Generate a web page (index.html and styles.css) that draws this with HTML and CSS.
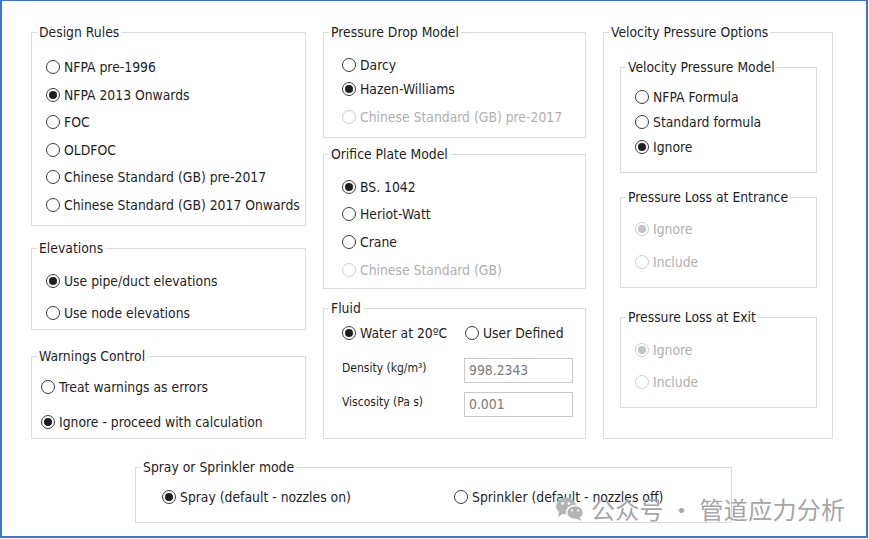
FILE: index.html
```html
<!DOCTYPE html>
<html lang="en">
<head>
    <meta charset="UTF-8">
    <title>Calculation Options</title>
    <link rel="stylesheet" href="styles.css">
</head>
<body>
    <div class="frame">
        <div class="columns">
            <div class="col col-1">
                <div class="group g-rules">
                    <div class="legend">Design Rules</div>
                    <div class="opts">
                        <label class="opt"><span class="radio"></span>NFPA pre-1996</label>
                        <label class="opt"><span class="radio on"></span>NFPA 2013 Onwards</label>
                        <label class="opt"><span class="radio"></span>FOC</label>
                        <label class="opt"><span class="radio"></span>OLDFOC</label>
                        <label class="opt"><span class="radio"></span>Chinese Standard (GB) pre-2017</label>
                        <label class="opt"><span class="radio"></span>Chinese Standard (GB) 2017 Onwards</label>
                    </div>
                </div>
                <div class="group g-elev">
                    <div class="legend">Elevations</div>
                    <div class="opts">
                        <label class="opt"><span class="radio on"></span>Use pipe/duct elevations</label>
                        <label class="opt"><span class="radio"></span>Use node elevations</label>
                    </div>
                </div>
                <div class="group g-warn">
                    <div class="legend">Warnings Control</div>
                    <div class="opts">
                        <label class="opt"><span class="radio"></span>Treat warnings as errors</label>
                        <label class="opt"><span class="radio on"></span>Ignore - proceed with calculation</label>
                    </div>
                </div>
            </div>

            <div class="col col-2">
                <div class="group g-pdm">
                    <div class="legend">Pressure Drop Model</div>
                    <div class="opts">
                        <label class="opt"><span class="radio"></span>Darcy</label>
                        <label class="opt"><span class="radio on"></span>Hazen-Williams</label>
                        <label class="opt off spaced"><span class="radio"></span>Chinese Standard (GB) pre-2017</label>
                    </div>
                </div>
                <div class="group g-opm">
                    <div class="legend">Orifice Plate Model</div>
                    <div class="opts">
                        <label class="opt"><span class="radio on"></span>BS. 1042</label>
                        <label class="opt"><span class="radio"></span>Heriot-Watt</label>
                        <label class="opt"><span class="radio"></span>Crane</label>
                        <label class="opt off"><span class="radio"></span>Chinese Standard (GB)</label>
                    </div>
                </div>
                <div class="group g-fluid">
                    <div class="legend">Fluid</div>
                    <div class="fluid-radios">
                        <label class="opt water"><span class="radio on"></span>Water at 20ºC</label>
                        <label class="opt"><span class="radio"></span>User Defined</label>
                    </div>
                    <div class="field first">
                        <span class="field-label">Density (kg/m³)</span>
                        <input class="field-input" type="text" value="998.2343" disabled>
                    </div>
                    <div class="field">
                        <span class="field-label">Viscosity (Pa s)</span>
                        <input class="field-input" type="text" value="0.001" disabled>
                    </div>
                </div>
            </div>

            <div class="col col-3">
                <div class="group g-vpo">
                    <div class="legend">Velocity Pressure Options</div>
                    <div class="group g-vpm">
                        <div class="legend">Velocity Pressure Model</div>
                        <div class="opts">
                            <label class="opt"><span class="radio"></span>NFPA Formula</label>
                            <label class="opt"><span class="radio"></span>Standard formula</label>
                            <label class="opt"><span class="radio on"></span>Ignore</label>
                        </div>
                    </div>
                    <div class="group g-ple">
                        <div class="legend">Pressure Loss at Entrance</div>
                        <div class="opts">
                            <label class="opt off"><span class="radio on"></span>Ignore</label>
                            <label class="opt off"><span class="radio"></span>Include</label>
                        </div>
                    </div>
                    <div class="group g-plx">
                        <div class="legend">Pressure Loss at Exit</div>
                        <div class="opts">
                            <label class="opt off"><span class="radio on"></span>Ignore</label>
                            <label class="opt off"><span class="radio"></span>Include</label>
                        </div>
                    </div>
                </div>
            </div>
        </div>

        <div class="group g-spray">
            <div class="legend">Spray or Sprinkler mode</div>
            <div class="opts row">
                <label class="opt spray"><span class="radio on"></span>Spray (default - nozzles on)</label>
                <label class="opt"><span class="radio"></span>Sprinkler (default - nozzles off)</label>
            </div>
        </div>

        <!-- filigrane -->
        <div class="watermark">
            <svg class="wm-icon" width="30" height="26" viewBox="0 0 30 26">
                <ellipse cx="11" cy="10" rx="10" ry="8.5" fill="#b4b4b4"/>
                <polygon points="4,15 3,21 9,17" fill="#b4b4b4"/>
                <circle cx="7.5" cy="7.5" r="1.3" fill="#fff"/>
                <circle cx="14" cy="7.5" r="1.3" fill="#fff"/>
                <ellipse cx="20" cy="16.5" rx="8.5" ry="7" fill="#b4b4b4" stroke="#fff" stroke-width="1.5"/>
                <polygon points="24,21 27,25 21,22.5" fill="#b4b4b4"/>
                <circle cx="17" cy="14.5" r="1.1" fill="#fff"/>
                <circle cx="23" cy="14.5" r="1.1" fill="#fff"/>
            </svg>
            <span class="wm-text">公众号 · 管道应力分析</span>
        </div>
    </div>
</body>
</html>
```

FILE: styles.css
```css
body {
    margin: 0;
    background: #fff;
    font-family: "DejaVu Sans Condensed", "Liberation Sans", sans-serif;
    font-size: 13.8px;
    color: #1e1e1e;
}

.frame {
    position: relative;
    width: 868px;
    height: 538px;
    box-sizing: border-box;
    border: 2px solid #4472c4;
    border-top-width: 1px;
    padding: 31px 0 0 29px;
}

.columns {
    display: flex;
    gap: 17px;
    align-items: flex-start;
}

.col {
    display: flex;
    flex-direction: column;
}

.col-1 { width: 275px; }
.col-2 { width: 263px; }
.col-3 { width: 230px; }

.group {
    border: 1px solid #dcdcdc;
    box-sizing: border-box;
}

.legend {
    width: fit-content;
    height: 16px;
    line-height: 16px;
    margin: -9px 0 0 5px;
    padding: 0 2px;
    background: #fff;
    white-space: nowrap;
}

.opts {
    display: flex;
    flex-direction: column;
}

.opts.row {
    flex-direction: row;
}

.opt {
    display: flex;
    align-items: center;
    gap: 4px;
    white-space: nowrap;
}

.radio {
    flex: none;
    width: 14px;
    height: 14px;
    box-sizing: border-box;
    border: 1px solid #3a3a3a;
    border-radius: 50%;
    display: flex;
    align-items: center;
    justify-content: center;
}

.radio.on::after {
    content: '';
    width: 8px;
    height: 8px;
    border-radius: 50%;
    background: #1e1e1e;
}

.opt.off { color: #b0b0b0; }
.opt.off .radio { border-color: #cdcdcd; }
.opt.off .radio.on::after { background: #c4c4c4; }

/* colonne de gauche */
.g-rules { height: 194px; }
.g-rules .opts { padding: 13.2px 0 0 14px; }
.g-rules .opt { height: 27.6px; }

.g-elev { height: 82px; margin-top: 22px; }
.g-elev .opts { padding: 9.15px 0 0 14px; }
.g-elev .opt { height: 31.7px; }

.g-warn { height: 83px; margin-top: 26px; }
.g-warn .opts { padding: 5.2px 0 0 9px; }
.g-warn .opt { height: 35px; }

/* colonne du milieu */
.g-pdm { height: 106px; }
.g-pdm .opts { padding: 13.25px 0 0 18px; }
.g-pdm .opt { height: 23.5px; }
.g-pdm .opt.spaced { margin-top: 4.5px; }

.g-opm { height: 135px; margin-top: 16px; }
.g-opm .opts { padding: 10.85px 0 0 18px; }
.g-opm .opt { height: 27.7px; }

.g-fluid { height: 131px; margin-top: 19px; }

.fluid-radios {
    display: flex;
    padding: 5.3px 0 0 18px;
}

.fluid-radios .opt { height: 24px; }
.fluid-radios .water { width: 123px; }

.field {
    display: flex;
    align-items: center;
    padding-left: 18px;
    margin-top: 9px;
}

.field.first { margin-top: 12.7px; }

.field-label {
    width: 122px;
    font-size: 12px;
    margin-top: -4px;
}

.field-input {
    width: 109px;
    height: 25px;
    box-sizing: border-box;
    margin: 0;
    border: 1px solid #cacaca;
    padding: 0 4px;
    background: #fff;
    color: #7c7c7c;
    font: inherit;
}

/* colonne de droite */
.g-vpo {
    height: 407px;
    padding: 0 15px 0 16px;
}

.g-vpo > .legend { margin-left: -11px; }

.g-vpm { height: 106px; margin-top: 27px; }
.g-vpm .opts { padding: 9.05px 0 0 14px; }
.g-vpm .opt { height: 25.3px; }

.g-ple { height: 91px; margin-top: 24px; }
.g-ple .opts { padding: 8.1px 0 0 14px; }
.g-ple .opt { height: 32.4px; }

.g-plx { height: 91px; margin-top: 29px; }
.g-plx .opts { padding: 9.15px 0 0 14px; }
.g-plx .opt { height: 31.7px; }

/* bas */
.g-spray {
    width: 597px;
    height: 56px;
    margin: 28px 0 0 104px;
}

.g-spray .opts { padding: 9.7px 0 0 26px; }
.g-spray .opt { height: 24px; }
.g-spray .spray { width: 292px; }

.watermark {
    position: absolute;
    left: 553px;
    top: 490px;
    display: flex;
    align-items: center;
    gap: 6px;
    pointer-events: none;
}

.wm-text {
    font-family: "Noto Sans CJK SC", sans-serif;
    font-size: 24px;
    color: #a6a6a6;
    white-space: pre;
    letter-spacing: 0.3px;
}
```
